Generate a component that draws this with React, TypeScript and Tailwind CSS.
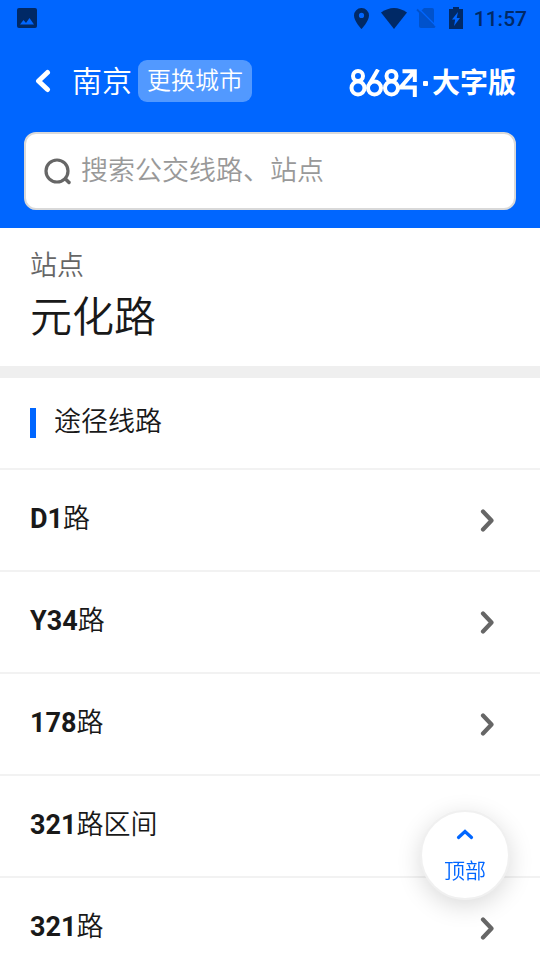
import React from "react";

const routes = [
    { code: "D1", suffix: "路" },
    { code: "Y34", suffix: "路" },
    { code: "178", suffix: "路" },
    { code: "321", suffix: "路区间" },
    { code: "321", suffix: "路" },
];

export default function App() {
    return (
        <div className="h-dvh overflow-hidden bg-white font-[350] text-[#191919] font-['Roboto','Noto_Sans_CJK_SC',sans-serif]">
            <header className="bg-[#0066ff] text-white">
                <StatusBar />
                <NavBar />
                <SearchBox />
            </header>
            <main>
                <section className="border-b-12 border-[#efefef] px-[30px] pt-5 pb-3.5">
                    <p className="text-[27px] leading-[36px] text-[#666666]">站点</p>
                    <h1 className="text-[42px] leading-[68px] font-[350]">元化路</h1>
                </section>
                <section>
                    <div className="flex h-[92px] items-center border-b-2 border-[#f2f2f2] px-[30px]">
                        <span className="h-[30px] w-1.5 bg-[#0066ff]" />
                        <h2 className="pb-0.5 pl-[18px] text-[27px] leading-[36px] font-[350]">途径线路</h2>
                    </div>
                    <ul>
                        {routes.map((route, i) => (
                            <RouteRow key={i} code={route.code} suffix={route.suffix} />
                        ))}
                    </ul>
                </section>
            </main>
            <BackToTop />
        </div>
    );
}

const StatusBar = () => {
    return (
        <div className="flex h-9 items-center justify-between pr-[13px] pl-[17px] text-[#002966]">
            <svg className="size-5" viewBox="0 0 20 20" aria-hidden="true">
                <rect width="20" height="20" rx="2" fill="currentColor" />
                <path d="M3 16.500 6.500 12l2.500 3 3.500-5 4.500 6.500z" fill="#0066ff" />
            </svg>
            <div className="flex items-center">
                <svg className="h-[21px] w-[15px]" viewBox="0 0 15 21" aria-hidden="true">
                    <path
                        fillRule="evenodd"
                        fill="currentColor"
                        d="M7.500 0A7.400 7.400 0 0 0 0 7.400C0 13 7.500 21 7.500 21S15 13 15 7.400A7.400 7.400 0 0 0 7.500 0Zm0 4.800a2.600 2.600 0 1 1 0 5.200 2.600 2.600 0 0 1 0-5.200Z"
                    />
                </svg>
                <svg className="ml-3 h-[21px] w-[26px]" viewBox="0 0 26 21" aria-hidden="true">
                    <path d="M0 4.500Q13-4.500 26 4.500L13 21Z" fill="currentColor" />
                </svg>
                <svg className="ml-[9px] h-5 w-5 text-[#0052cc]" viewBox="0 0 20 20" aria-hidden="true">
                    <path d="M8 0h8q2 0 2 2v18H5q-2 0-2-2V5z" fill="currentColor" />
                    <path d="m2.500.500 17 17" stroke="#0066ff" strokeWidth="1.500" />
                    <path d="m1 1.500 18 18" stroke="currentColor" strokeWidth="1.800" />
                </svg>
                <svg className="ml-[13px] h-[22px] w-3.5" viewBox="0 0 14 22" aria-hidden="true">
                    <path
                        fillRule="evenodd"
                        fill="currentColor"
                        d="M4 0h6v2h4v20H0V2h4zM9 5 3 12.500h3.200L5 19l6-8H7.700z"
                    />
                </svg>
                <span className="ml-[11px] pt-0.5 text-[21px] leading-[34px] font-medium">11:57</span>
            </div>
        </div>
    );
};

const NavBar = () => {
    return (
        <nav className="flex h-[90px] items-center pr-6 pl-[34px]">
            <button type="button" aria-label="返回">
                <svg className="h-6 w-[18px]" viewBox="0 0 18 24" fill="none" aria-hidden="true">
                    <path
                        d="M13.500 3.500 4.500 12l9 8.500"
                        stroke="currentColor"
                        strokeWidth="5"
                        strokeLinecap="round"
                        strokeLinejoin="round"
                    />
                </svg>
            </button>
            <span className="ml-5 pt-0.5 text-[30px] leading-[42px]">南京</span>
            <a
                href="#city"
                className="ml-1.5 rounded-[9px] bg-[#5299ff] px-[9px] text-2xl leading-[42px]"
            >
                更换城市
            </a>
            <a href="#home" className="ml-auto flex items-center pt-1">
                <Logo />
                <span className="ml-1.5 size-[5px] rounded-[1px] bg-white" />
                <span className="ml-1 pt-0.5 text-[28px] leading-[42px] font-bold">大字版</span>
            </a>
        </nav>
    );
};

const Logo = () => {
    return (
        <svg
            className="h-7 w-[68px]"
            viewBox="0 0 68 28"
            fill="none"
            stroke="currentColor"
            strokeWidth="4"
            role="img"
            aria-label="8684"
        >
            <circle cx="9" cy="7" r="5" />
            <circle cx="9" cy="19" r="6.500" />
            <circle cx="25.500" cy="19" r="6.500" />
            <path d="M29 .500 20.500 15" />
            <circle cx="42.500" cy="7" r="5" />
            <circle cx="42.500" cy="19" r="6.500" />
            <path d="M53.500 2.200h12.300V13M65 3 51.500 18.500h14.300V28" />
        </svg>
    );
};

const SearchBox = () => {
    return (
        <form className="px-6 pt-1.5 pb-[18px]">
            <label className="flex h-[78px] items-center rounded-xl border-2 border-[#d9d9d9] bg-white px-[18px]">
                <svg className="size-7 shrink-0" viewBox="0 0 28 28" fill="none" stroke="#666666" aria-hidden="true">
                    <circle cx="13" cy="14" r="11" strokeWidth="3.200" />
                    <path d="m21.500 22 3.500 3.500" strokeWidth="3.500" strokeLinecap="round" />
                </svg>
                <input
                    type="text"
                    aria-label="搜索"
                    placeholder="搜索公交线路、站点"
                    className="ml-[9px] min-w-0 flex-1 text-[27px] leading-[40px] font-[350] outline-none placeholder:text-[#999999]"
                />
            </label>
        </form>
    );
};

const RouteRow = ({ code, suffix }: { code: string; suffix: string }) => {
    return (
        <li className="border-b-2 border-[#f2f2f2]">
            <a href="#route" className="flex h-[100px] items-center justify-between pr-11 pl-[30px]">
                <span className="pb-0.5 text-[27px] leading-[36px]">
                    <b className="font-bold">{code}</b>
                    {suffix}
                </span>
                <svg className="h-6 w-[18px]" viewBox="0 0 18 24" fill="none" aria-hidden="true">
                    <path
                        d="m5 3.500 8.500 9-8.500 9"
                        stroke="#666666"
                        strokeWidth="4.200"
                        strokeLinecap="round"
                        strokeLinejoin="round"
                    />
                </svg>
            </a>
        </li>
    );
};

const BackToTop = () => {
    return (
        <button
            type="button"
            className="fixed right-[30px] bottom-[60px] flex size-[90px] flex-col items-center rounded-full border-2 border-[#f0f0f0] bg-white pt-4 font-[350] text-[#0066ff] shadow-[0_6px_24px_rgba(0,0,0,0.15)]"
        >
            <svg className="h-3 w-[18px]" viewBox="0 0 18 12" fill="none" aria-hidden="true">
                <path
                    d="m2.500 9.500 6.500-6 6.500 6"
                    stroke="currentColor"
                    strokeWidth="3.200"
                    strokeLinecap="round"
                />
            </svg>
            <span className="mt-[15px] text-[21px] leading-[32px]">顶部</span>
        </button>
    );
};
